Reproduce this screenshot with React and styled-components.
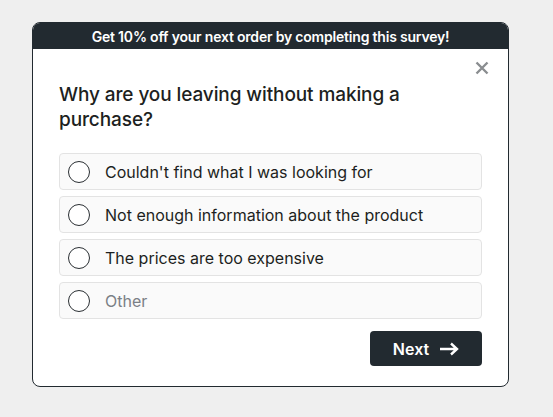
import React, { useState } from 'react';
import styled, { createGlobalStyle } from 'styled-components';

const GlobalStyle = createGlobalStyle`
    html, body {
        margin: 0;
        padding: 0;
        background: #efefef;
    }
    body {
        font-family: Inter, "Liberation Sans", Arial, sans-serif;
        color: #1d1f21;
    }
`;

const Page = styled.div`
    padding: 22px 0 0 32px;
    min-height: 417px;
    box-sizing: border-box;
`;

const Card = styled.div`
    width: 477px;
    box-sizing: border-box;
    background: #fff;
    border: 1px solid #222a30;
    border-radius: 8px;
    overflow: hidden;
`;

const Banner = styled.div`
    height: 26px;
    background: #222a30;
    color: #fff;
    font-size: 14px;
    font-weight: 600;
    display: flex;
    align-items: center;
    justify-content: center;
    letter-spacing: -0.2px;
`;

const Body = styled.div`
    padding: 9px 26px 20px;
    display: flex;
    flex-direction: column;
`;

const CloseRow = styled.div`
    display: flex;
    justify-content: flex-end;
    height: 20px;
    margin-right: -10px;
`;

const CloseButton = styled.button`
    border: none;
    background: none;
    padding: 0;
    width: 20px;
    height: 20px;
    display: flex;
    align-items: center;
    justify-content: center;
    cursor: pointer;
`;

const Question = styled.h2`
    margin: 4px 0 21px;
    font-size: 19px;
    line-height: 25px;
    font-weight: 500;
    color: #1d1f21;
    letter-spacing: -0.1px;
`;

const Options = styled.div`
    display: flex;
    flex-direction: column;
    gap: 6px;
`;

const Option = styled.label`
    height: 37px;
    box-sizing: border-box;
    display: flex;
    align-items: center;
    gap: 15px;
    padding: 0 8px;
    background: #fafafa;
    border: 1px solid #e3e3e3;
    border-radius: 4px;
    font-size: 16px;
    color: ${props => props.muted ? '#7b8086' : '#1d1f21'};
    cursor: pointer;
`;

const Radio = styled.span`
    width: 22px;
    height: 22px;
    box-sizing: border-box;
    border-radius: 50%;
    border: 1.5px solid #2a2f33;
    background: #fff;
    display: flex;
    align-items: center;
    justify-content: center;
    &::after {
        content: '';
        width: 10px;
        height: 10px;
        border-radius: 50%;
        background: ${props => props.checked ? '#222a30' : 'transparent'};
    }
`;

const Footer = styled.div`
    display: flex;
    justify-content: flex-end;
    margin-top: 12px;
`;

const NextButton = styled.button`
    width: 112px;
    height: 35px;
    border: none;
    border-radius: 4px;
    background: #222a30;
    color: #fff;
    font-family: Inter, "Liberation Sans", Arial, sans-serif;
    font-size: 16px;
    font-weight: 600;
    display: flex;
    align-items: center;
    justify-content: center;
    gap: 10px;
    cursor: pointer;
`;

const answers = [
    "Couldn't find what I was looking for",
    'Not enough information about the product',
    'The prices are too expensive',
];

export default function App() {
    const [picked, setPicked] = useState(null);

    return (
        <Page>
            <GlobalStyle />
            <Card>
                <Banner>Get 10% off your next order by completing this survey!</Banner>
                <Body>
                    <CloseRow>
                        <CloseButton aria-label="Close">
                            <svg width="14" height="14" viewBox="0 0 14 14">
                                <path d="M1.5 1.5 L12.5 12.5 M12.5 1.5 L1.5 12.5" stroke="#8a8d90" strokeWidth="2.4" />
                            </svg>
                        </CloseButton>
                    </CloseRow>
                    <Question>Why are you leaving without making a purchase?</Question>
                    <Options>
                        {answers.map((a, i) => (
                            <Option key={a} onClick={() => setPicked(i)}>
                                <Radio checked={picked === i} />
                                {a}
                            </Option>
                        ))}
                        <Option muted onClick={() => setPicked('other')}>
                            <Radio checked={picked === 'other'} />
                            Other
                        </Option>
                    </Options>
                    <Footer>
                        <NextButton>
                            Next
                            <svg width="20" height="14" viewBox="0 0 20 14">
                                <path d="M1 7 H18 M12 1.5 L18 7 L12 12.5" stroke="#fff" strokeWidth="2.4" fill="none" />
                            </svg>
                        </NextButton>
                    </Footer>
                </Body>
            </Card>
        </Page>
    );
}
